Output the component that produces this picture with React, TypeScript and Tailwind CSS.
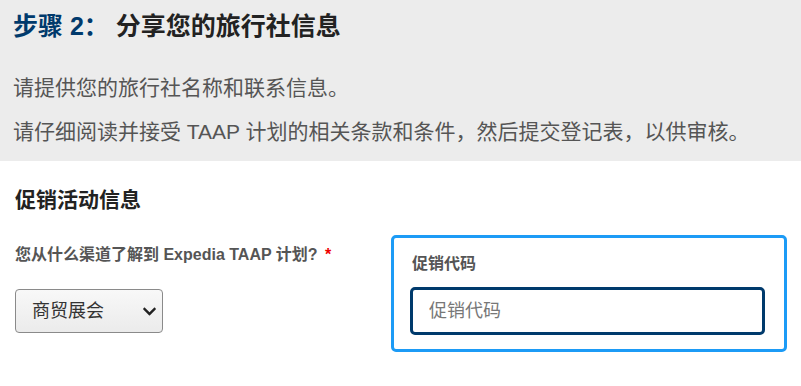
import React from 'react';
import { FaChevronDown } from 'react-icons/fa';

const font = { fontFamily: '"Liberation Sans", "Noto Sans CJK SC", sans-serif' };

export default function App() {
  return (
    <div className="w-[801px] h-[386px] bg-white overflow-hidden" style={font}>
      {/* Intro */}
      <div className="bg-[#ececec] pl-[13px] pt-[10px] pb-[14px]">
        <h2 className="text-[25px] leading-[32px] font-bold text-[#222]">
          <span className="text-[#003a6c]">步骤 2：</span> 分享您的旅行社信息
        </h2>
        <p className="mt-[31px] text-[21px] leading-[30px] text-[#555]">请提供您的旅行社名称和联系信息。</p>
        <p className="mt-[14px] text-[21px] leading-[30px] text-[#555]">
          请仔细阅读并接受 TAAP 计划的相关条款和条件，然后提交登记表，以供审核。
        </p>
      </div>

      {/* Promotion */}
      <div className="pl-[15px] pr-[14px] pt-[25px]">
        <h3 className="text-[21px] leading-[28px] font-bold text-[#222]">促销活动信息</h3>
        <div className="mt-[21px] flex">
          <div className="w-[376px] pt-[10px]">
            <label className="block text-[16px] leading-[20px] font-bold text-[#555]">
              您从什么渠道了解到 Expedia TAAP 计划? <span className="ml-[3px] text-[#e00]">*</span>
            </label>
            <div className="mt-[24px] w-[148px] h-[44px] flex items-center justify-between pl-[16px] pr-[5px] rounded-[4px] border-[1.5px] border-[#8a8a8a] bg-gradient-to-b from-[#f8f8f8] to-[#ebebeb]">
              <span className="text-[18px] text-[#333]">商贸展会</span>
              <FaChevronDown className="w-[15px] h-[15px] text-[#222]" />
            </div>
          </div>
          <div className="w-[396px] border-[3px] border-[#1c9bf6] rounded-[5px] pl-[16px] pr-[19px] pt-[16px] pb-[14px]">
            <label className="block pl-[2px] text-[16px] leading-[20px] font-bold text-[#555]">促销代码</label>
            <input
              placeholder="促销代码"
              className="mt-[13px] block w-full h-[48px] border-[3px] border-[#003a6c] rounded-[5px] px-[16px] text-[18px] text-[#333] placeholder:text-[#777] outline-none"
              style={font}
            />
          </div>
        </div>
      </div>
    </div>
  );
}
